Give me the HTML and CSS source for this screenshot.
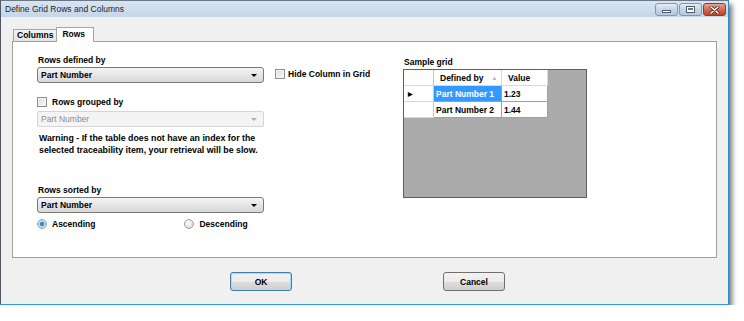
FILE: index.html
```html
<!DOCTYPE html>
<html lang="en">
<head>
  <meta charset="UTF-8" />
  <title>Define Grid Rows and Columns</title>
  <link rel="stylesheet" href="styles.css">
</head>
<body>

  <div class="window">
    <div class="titlebar">
      <span class="title">Define Grid Rows and Columns</span>
      <div class="caption-btns">
        <span class="cap min"><i></i></span>
        <span class="cap max"><i></i></span>
        <span class="cap close">
          <svg width="11" height="8" viewBox="0 0 11 8">
            <path d="M2 1 L9 7 M9 1 L2 7" stroke="#5a2a22" stroke-width="3" stroke-linecap="round"/>
            <path d="M2 1 L9 7 M9 1 L2 7" stroke="#fff" stroke-width="1.6" stroke-linecap="round"/>
          </svg>
        </span>
      </div>
    </div>

    <div class="client">
      <div class="tabs">
        <span class="tab">Columns</span>
        <span class="tab active">Rows</span>
      </div>

      <div class="panel">
        <div class="left-col">
          <div class="label">Rows defined by</div>
          <div class="combo"><span>Part Number</span><i class="arrow"></i></div>

          <label class="check-row grouped"><span class="checkbox"></span>Rows grouped by</label>
          <div class="combo disabled"><span>Part Number</span><i class="arrow"></i></div>

          <p class="warning">Warning - If the table does not have an index for the<br>selected traceability item, your retrieval will be slow.</p>

          <div class="label sorted">Rows sorted by</div>
          <div class="combo"><span>Part Number</span><i class="arrow"></i></div>

          <div class="radios">
            <label class="radio-row"><span class="radio checked"></span>Ascending</label>
            <label class="radio-row desc"><span class="radio"></span>Descending</label>
          </div>
        </div>

        <div class="hide-col">
          <label class="check-row"><span class="checkbox"></span>Hide Column in Grid</label>
        </div>

        <div class="grid-col">
          <div class="label">Sample grid</div>
          <div class="dgv">
            <div class="dgv-table">
              <div class="hcell corner"></div>
              <div class="hcell">Defined by <span class="sort">▲</span></div>
              <div class="hcell">Value</div>

              <div class="rowhead"><span class="current">▶</span></div>
              <div class="cell selected">Part Number 1</div>
              <div class="cell">1.23</div>

              <div class="rowhead"></div>
              <div class="cell">Part Number 2</div>
              <div class="cell">1.44</div>
            </div>
          </div>
        </div>
      </div>

      <div class="buttons">
        <button class="btn default">OK</button>
        <button class="btn">Cancel</button>
      </div>
    </div>
  </div>

</body>
</html>
```

FILE: styles.css
```css
* {
  box-sizing: border-box;
}

html, body {
  margin: 0;
  padding: 0;
  background: #fff;
  font-family: 'Liberation Sans', Arial, sans-serif;
  color: #000;
}

.window {
  width: 729px;
  height: 305px;
  background: #f0f0f0;
  border-top: 1px solid #6b7785;
  border-left: 1px solid #4f5862;
  border-right: 1px solid #2a8fc2;
  border-bottom: 1px solid #2aa0d6;
  box-shadow: 3px 4px 5px rgba(0, 0, 0, 0.55);
  display: flex;
  flex-direction: column;
}

/* title bar */

.titlebar {
  height: 16px;
  background: linear-gradient(to bottom, #d9e4f1, #c6d6e8);
  display: flex;
  align-items: center;
  justify-content: space-between;
  padding-left: 4px;
  padding-right: 2px;
}

.title {
  font-size: 8.5px;
  color: #1e1e1e;
}

.caption-btns {
  display: flex;
  gap: 1px;
  padding-top: 1px;
}

.cap {
  width: 23px;
  height: 13px;
  border: 1px solid #8697ad;
  border-radius: 3px;
  background: linear-gradient(to bottom, #e4ecf6, #c6d4e6 50%, #b6c8de);
  display: flex;
  align-items: center;
  justify-content: center;
}

.cap.min i {
  width: 9px;
  height: 3px;
  margin-top: 3px;
  background: #fff;
  border: 1px solid #505d6e;
}

.cap.max i {
  width: 9px;
  height: 7px;
  background: #fff;
  border: 1px solid #505d6e;
  box-shadow: inset 0 0 0 1px #fff, inset 0 2px 0 1px #6c7a8c;
}

.cap.close {
  width: 23px;
  border-color: #8a3d31;
  background: linear-gradient(to bottom, #e8a493, #d56b55 50%, #c2412a);
}

/* client area */

.client {
  flex: 1;
  padding: 10px 0 0 11px;
  display: flex;
  flex-direction: column;
}

.tabs {
  display: flex;
  align-items: flex-end;
  height: 14px;
  margin-left: 1px;
  position: relative;
  z-index: 1;
}

.tab {
  font-size: 8.5px;
  font-weight: bold;
  height: 12px;
  line-height: 11px;
  padding: 0 3px;
  border: 1px solid #a5a5a5;
  border-bottom: none;
  background: linear-gradient(to bottom, #f3f3f3, #e4e4e4);
}

.tab.active {
  height: 15px;
  margin-bottom: -1px;
  margin-left: -1px;
  padding: 1px 8px 0 5px;
  background: #fff;
}

.panel {
  width: 705px;
  height: 217px;
  background: #fff;
  border: 1px solid #a0a0a0;
  display: flex;
  padding: 12px 0 0 24px;
}

.label {
  font-size: 8.5px;
  font-weight: bold;
  line-height: 12px;
  height: 12px;
  padding-left: 1px;
}

/* left column */

.left-col {
  width: 227px;
  display: flex;
  flex-direction: column;
}

.combo {
  margin-top: 1px;
  height: 16px;
  border: 1px solid #7a7a7a;
  border-radius: 3px;
  background: linear-gradient(to bottom, #f4f4f4, #e6e6e6 50%, #d7d7d7);
  display: flex;
  align-items: center;
  justify-content: space-between;
  padding: 0 6px 0 3px;
  font-size: 8.5px;
  font-weight: bold;
}

.combo .arrow {
  width: 0;
  height: 0;
  border-left: 3px solid transparent;
  border-right: 3px solid transparent;
  border-top: 3px solid #000;
}

.combo.disabled {
  margin-top: 3px;
  border-color: #d5d5d5;
  border-radius: 2px;
  background: #f4f4f4;
  color: #8d8d8d;
  font-weight: normal;
}

.combo.disabled .arrow {
  border-top-color: #b0b0b0;
}

.check-row {
  display: flex;
  align-items: center;
  gap: 5px;
  height: 12px;
  font-size: 8.5px;
  font-weight: bold;
}

.check-row.grouped {
  margin-top: 13px;
}

.checkbox {
  width: 10px;
  height: 10px;
  border: 1px solid #8e8f8f;
  background: linear-gradient(135deg, #dcdcdc, #fafafa);
  box-shadow: inset 0 0 0 1px #f4f4f4;
}

.warning {
  margin: 5px 0 0 2px;
  font-size: 8.8px;
  font-weight: bold;
  line-height: 12px;
}

.label.sorted {
  margin-top: 28px;
}

.radios {
  margin-top: 5px;
  display: flex;
  height: 12px;
}

.radio-row {
  display: flex;
  align-items: center;
  gap: 5px;
  font-size: 8.5px;
  font-weight: bold;
}

.radio-row.desc {
  margin-left: 89px;
}

.radio {
  width: 10px;
  height: 10px;
  border-radius: 50%;
  border: 1px solid #a2a2a2;
  background: radial-gradient(circle at 40% 35%, #fff, #d0d0d0);
}

.radio.checked {
  border-color: #8f9aa6;
  background: radial-gradient(circle, #2a6fb0 0, #49a3d9 2px, #cfe4f2 3px, #f2f2f2 5px);
}

/* hide column */

.hide-col {
  width: 128px;
  margin-left: 11px;
  padding-top: 14px;
}

.hide-col .check-row {
  gap: 3px;
}

/* sample grid */

.grid-col {
  padding-top: 2px;
}

.grid-col .label {
  margin-bottom: 1px;
}

.dgv {
  width: 184px;
  height: 129px;
  background: #ababab;
  border: 1px solid #5e5e5e;
}

.dgv-table {
  display: inline-grid;
  grid-template-columns: 30px 68px 46px;
  grid-auto-rows: 16px;
  font-size: 8.5px;
  font-weight: bold;
}

.hcell {
  background: #fff;
  border-right: 1px solid #dadada;
  border-bottom: 1px solid #dadada;
  display: flex;
  align-items: center;
  padding-left: 6px;
}

.hcell.corner {
  border-right-color: #c8c8c8;
}

.hcell .sort {
  font-size: 6px;
  color: #b4b4b4;
  margin-left: 8px;
}

.rowhead {
  background: #fff;
  border-right: 1px solid #c8c8c8;
  border-bottom: 1px solid #dadada;
  display: flex;
  align-items: center;
  padding-left: 4px;
}

.rowhead .current {
  font-size: 6px;
}

.cell {
  background: #fff;
  border-right: 1px solid #a0a0a0;
  border-bottom: 1px solid #a0a0a0;
  display: flex;
  align-items: center;
  padding-left: 2px;
  white-space: nowrap;
}

.cell.selected {
  background: #3399ff;
  color: #fff;
}

/* dialog buttons */

.buttons {
  display: flex;
  gap: 151px;
  margin: 14px 0 0 218px;
}

.btn {
  width: 62px;
  height: 19px;
  font-family: 'Liberation Sans', Arial, sans-serif;
  font-size: 8.5px;
  font-weight: bold;
  border: 1px solid #707070;
  border-radius: 3px;
  background: linear-gradient(to bottom, #f2f2f2, #ebebeb 50%, #dddddd 51%, #cfcfcf);
  padding: 0;
}

.btn.default {
  border-color: #3c7fb1;
  box-shadow: inset 0 0 0 1px #a6d9f4;
}
```
